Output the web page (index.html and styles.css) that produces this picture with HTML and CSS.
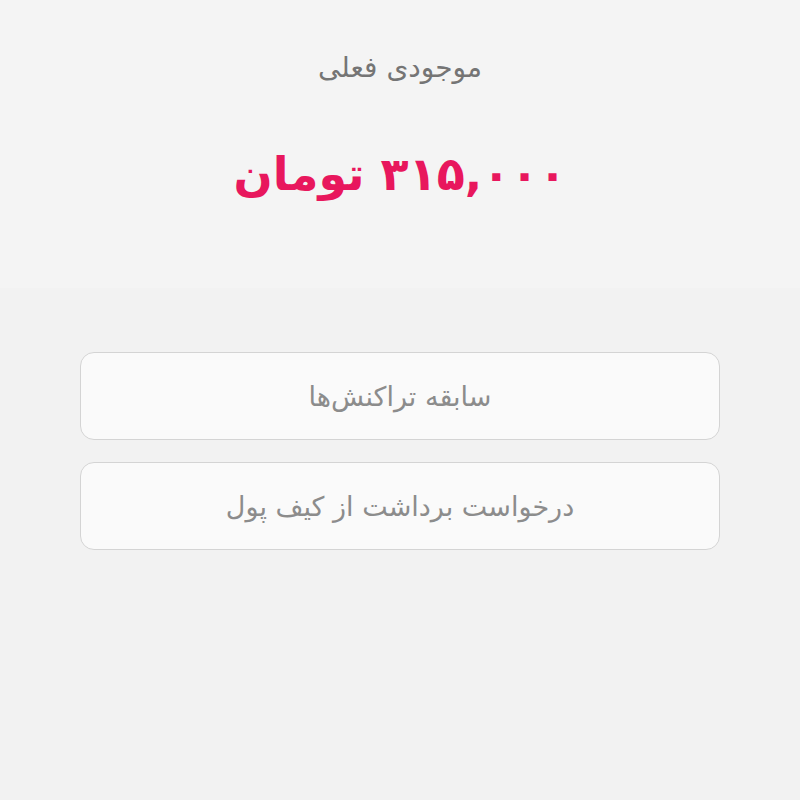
FILE: index.html
```html
<!DOCTYPE html>
<html lang="fa" dir="rtl">
<head>
    <meta charset="UTF-8">
    <meta name="viewport" content="width=device-width, initial-scale=1.0">
    <title>کیف پول</title>
    <link rel="stylesheet" href="styles.css">
</head>
<body>
    <div id="balance-box">
        <div class="balance-label">موجودی فعلی</div>
        <div class="balance-value">۳۱۵,۰۰۰ تومان</div>
    </div>
    <div id="actions">
        <button class="action-button">سابقه تراکنش‌ها</button>
        <button class="action-button">درخواست برداشت از کیف پول</button>
    </div>
</body>
</html>
```

FILE: styles.css
```css
body{font-family:"DejaVu Sans","Noto Sans",sans-serif;background:#f2f2f2;margin:0;padding:0;direction:rtl}
#balance-box{background:#f4f4f4;height:288px;box-sizing:border-box;padding-top:48px;text-align:center}
.balance-label{color:#757575;font-size:28px;line-height:40px}
.balance-value{color:#e8175d;font-size:46px;font-weight:bold;line-height:64px;margin-top:54px}
#actions{padding:64px 80px 0;display:flex;flex-direction:column;gap:22px}
.action-button{font-family:inherit;height:88px;background:#fafafa;border:1px solid #d4d4d4;border-radius:14px;color:#8c8c8c;font-size:27px;cursor:pointer}
```
